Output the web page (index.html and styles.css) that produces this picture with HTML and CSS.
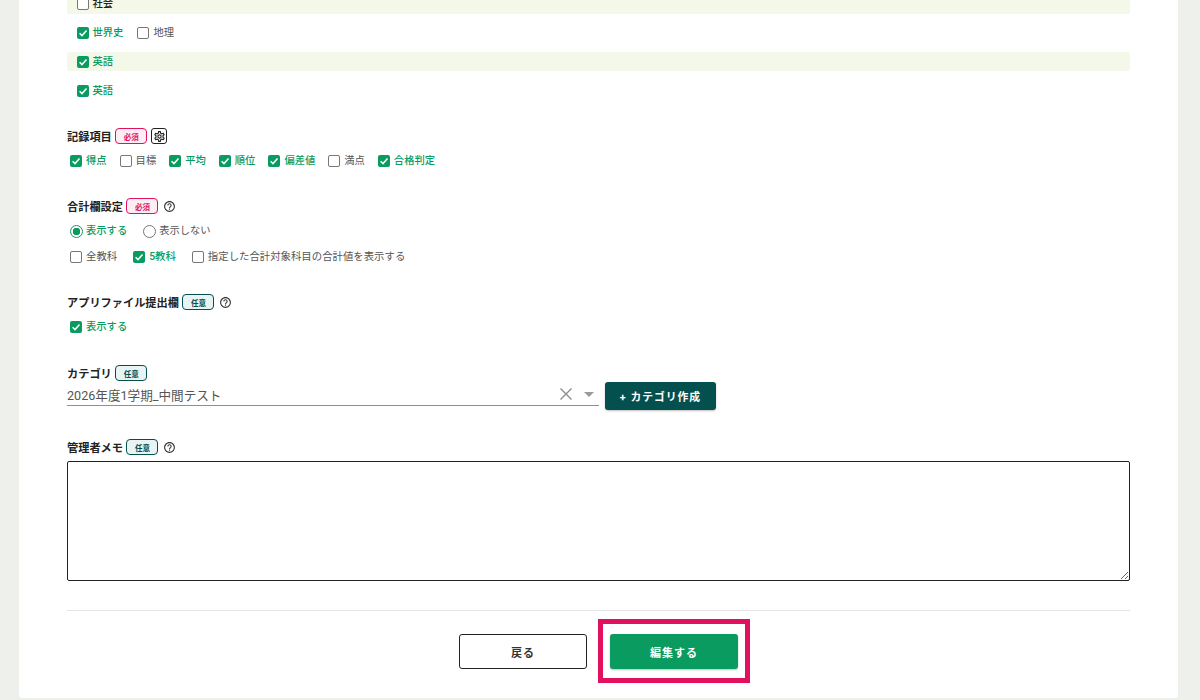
FILE: index.html
```html
<!DOCTYPE html>
<html lang="ja">
<head>
<meta charset="utf-8">
<title>編集</title>
<link rel="stylesheet" href="styles.css">
</head>
<body>
<svg class="defs" width="0" height="0" aria-hidden="true">
  <symbol id="tick" viewBox="0 0 12 12"><path d="M2.6 6.2 5 8.6l4.5-5" fill="none" stroke="#fff" stroke-width="1.5"/></symbol>
  <symbol id="help" viewBox="0 0 24 24"><path d="M11 18h2v-2h-2v2zm1-16C6.48 2 2 6.48 2 12s4.48 10 10 10 10-4.48 10-10S17.52 2 12 2zm0 18c-4.41 0-8-3.59-8-8s3.59-8 8-8 8 3.59 8 8-3.59 8-8 8zm0-14c-2.21 0-4 1.79-4 4h2c0-1.1.9-2 2-2s2 .9 2 2c0 2-3 1.75-3 5h2c0-2.25 3-2.5 3-5 0-2.21-1.79-4-4-4z"/></symbol>
</svg>
<main class="card">
  <div class="band band-first"><label class="opt"><span class="box"></span><span class="strong">社会</span></label></div>
  <div class="row-sub">
    <label class="opt on"><span class="box"><svg><use href="#tick"/></svg></span>世界史</label>
    <label class="opt"><span class="box"></span>地理</label>
  </div>
  <div class="band"><label class="opt on"><span class="box"><svg><use href="#tick"/></svg></span>英語</label></div>
  <div class="row-sub row-low">
    <label class="opt on"><span class="box"><svg><use href="#tick"/></svg></span>英語</label>
  </div>

  <section class="field field-record">
    <div class="label">記録項目<span class="badge req">必須</span>
      <button class="gear" type="button" aria-label="設定"><svg viewBox="0 0 24 24"><path d="M19.43 12.98c.04-.32.07-.64.07-.98 0-.34-.03-.66-.07-.98l2.11-1.65c.19-.15.24-.42.12-.64l-2-3.46c-.09-.16-.26-.25-.44-.25-.06 0-.12.01-.17.03l-2.49 1c-.52-.4-1.08-.73-1.69-.98l-.38-2.65C14.46 2.18 14.25 2 14 2h-4c-.25 0-.46.18-.49.42l-.38 2.65c-.61.25-1.17.59-1.69.98l-2.49-1c-.06-.02-.12-.03-.18-.03-.17 0-.34.09-.43.25l-2 3.46c-.13.22-.07.49.12.64l2.11 1.65c-.04.32-.07.65-.07.98 0 .33.03.66.07.98l-2.11 1.65c-.19.15-.24.42-.12.64l2 3.46c.09.16.26.25.44.25.06 0 .12-.01.17-.03l2.49-1c.52.4 1.08.73 1.69.98l.38 2.65c.03.24.24.42.49.42h4c.25 0 .46-.18.49-.42l.38-2.65c.61-.25 1.17-.59 1.69-.98l2.49 1c.06.02.12.03.18.03.17 0 .34-.09.43-.25l2-3.46c.12-.22.07-.49-.12-.64l-2.11-1.65zm-1.98-1.71c.04.31.05.52.05.73 0 .21-.02.43-.05.73l-.14 1.13.89.7 1.08.84-.7 1.21-1.27-.51-1.04-.42-.9.68c-.43.32-.84.56-1.25.73l-1.06.43-.16 1.13-.2 1.35h-1.4l-.19-1.35-.16-1.13-1.06-.43c-.43-.18-.83-.41-1.23-.71l-.91-.7-1.06.43-1.27.51-.7-1.21 1.08-.84.89-.7-.14-1.13c-.03-.31-.05-.54-.05-.74s.02-.43.05-.73l.14-1.13-.89-.7-1.08-.84.7-1.21 1.27.51 1.04.42.9-.68c.43-.32.84-.56 1.25-.73l1.06-.43.16-1.13.2-1.35h1.39l.19 1.35.16 1.13 1.06.43c.43.18.83.41 1.23.71l.91.7 1.06-.43 1.27-.51.7 1.21-1.07.85-.89.7.14 1.13zM12 8c-2.21 0-4 1.79-4 4s1.79 4 4 4 4-1.79 4-4-1.79-4-4-4zm0 6c-1.1 0-2-.9-2-2s.9-2 2-2 2 .9 2 2-.9 2-2 2z"/></svg></button>
    </div>
    <div class="opts">
      <label class="opt on"><span class="box"><svg><use href="#tick"/></svg></span>得点</label>
      <label class="opt"><span class="box"></span>目標</label>
      <label class="opt on"><span class="box"><svg><use href="#tick"/></svg></span>平均</label>
      <label class="opt on"><span class="box"><svg><use href="#tick"/></svg></span>順位</label>
      <label class="opt on"><span class="box"><svg><use href="#tick"/></svg></span>偏差値</label>
      <label class="opt"><span class="box"></span>満点</label>
      <label class="opt on"><span class="box"><svg><use href="#tick"/></svg></span>合格判定</label>
    </div>
  </section>

  <section class="field">
    <div class="label">合計欄設定<span class="badge req">必須</span><svg class="help"><use href="#help"/></svg></div>
    <div class="opts wide">
      <label class="opt on"><span class="radio"></span>表示する</label>
      <label class="opt"><span class="radio"></span>表示しない</label>
    </div>
    <div class="opts wide second">
      <label class="opt"><span class="box"></span>全教科</label>
      <label class="opt on"><span class="box"><svg><use href="#tick"/></svg></span>5教科</label>
      <label class="opt"><span class="box"></span>指定した合計対象科目の合計値を表示する</label>
    </div>
  </section>

  <section class="field">
    <div class="label">アプリファイル提出欄<span class="badge any">任意</span><svg class="help"><use href="#help"/></svg></div>
    <div class="opts">
      <label class="opt on"><span class="box"><svg><use href="#tick"/></svg></span>表示する</label>
    </div>
  </section>

  <section class="field field-category">
    <div class="label">カテゴリ<span class="badge any">任意</span></div>
    <div class="category-row">
      <div class="select">
        <span class="select-value">2026年度1学期_中間テスト</span>
        <svg class="clear" viewBox="0 0 14 14"><path d="M1.5 1.500l11 11M12.500 1.500l-11 11" fill="none" stroke="#8a8a8a" stroke-width="1.3"/></svg>
        <svg class="caret" viewBox="0 0 10 5"><path d="M0 0h10L5 5z" fill="#9a9a9a"/></svg>
      </div>
      <button class="btn-category" type="button">+ カテゴリ作成</button>
    </div>
  </section>

  <section class="field field-memo">
    <div class="label">管理者メモ<span class="badge any">任意</span><svg class="help"><use href="#help"/></svg></div>
    <textarea class="memo"></textarea>
  </section>

  <hr class="divider">
  <div class="actions">
    <button class="btn-back" type="button">戻る</button>
    <div class="submit-wrap">
      <button class="btn-submit" type="button">編集する</button>
      <span class="highlight"></span>
    </div>
  </div>
</main>
</body>
</html>
```
FILE: styles.css
```css
* { box-sizing: border-box; }
html, body { height: 100%; overflow: hidden; }
body {
  margin: 0;
  background: #eef0ec;
  font-family: "Roboto", "Noto Sans CJK JP", sans-serif;
  color: #222;
}
.defs { position: absolute; }
.card {
  width: 1159px;
  height: 703px;
  margin: -5px 0 0 19px;
  padding: 0 48px;
  background: #fff;
  border-radius: 0 0 3px 3px;
}
.band {
  height: 19px;
  padding-left: 9.500px;
  display: flex;
  align-items: center;
  background: #f3f8e9;
  border-radius: 2px;
}
.band-first { padding-bottom: 2px; }
.row-sub {
  height: 38px;
  padding-left: 9.500px;
  display: flex;
  align-items: center;
  gap: 14px;
}
.row-low { padding-top: 2px; }
.opt {
  display: inline-flex;
  align-items: center;
  gap: 4px;
  font-size: 10.300px;
  line-height: 16px;
  color: #555;
  white-space: nowrap;
}
.opt.on { color: #0a9b60; font-weight: 500; }
.strong { color: #222; font-weight: 500; }
.box {
  width: 12px;
  height: 12px;
  flex: none;
  border: 1px solid #777;
  border-radius: 2px;
  background: #fff;
}
.opt.on .box { background: #0a9b60; border: 0; }
.box svg { display: block; width: 12px; height: 12px; }
.radio {
  width: 13px;
  height: 13px;
  flex: none;
  margin-right: -1px;
  border: 1px solid #777;
  border-radius: 50%;
  background: #fff;
}
.opt.on .radio {
  border-color: #0a9b60;
  background: radial-gradient(circle, #0a9b60 0 3.5px, #fff 4px);
}
.field { margin-top: 29px; }
.field-record { margin-top: 19px; }
.field-category { margin-top: 30px; }
.field-memo { margin-top: 29px; }
.label {
  height: 16px;
  display: flex;
  align-items: center;
  font-size: 11.200px;
  font-weight: 700;
  color: #222;
}
.badge {
  width: 32px;
  height: 16px;
  margin-left: 3.500px;
  display: flex;
  align-items: center;
  justify-content: center;
  border: 1px solid;
  border-radius: 4px;
  font-size: 7.500px;
  font-weight: 700;
}
.req { color: #e0115f; border-color: #e0115f; background: #fdeef3; }
.any { color: #04504f; border-color: #04504f; background: #e8f4f3; }
.gear {
  width: 16px;
  height: 16px;
  margin-left: 4px;
  padding: 0.500px;
  display: block;
  border: 1px solid #222;
  border-radius: 3px;
  background: #fff;
}
.gear svg { display: block; width: 13px; height: 13px; fill: #222; }
.help { width: 13px; height: 13px; margin-left: 5px; fill: #333; }
.opts {
  height: 16px;
  margin-top: 9px;
  margin-left: 3px;
  display: flex;
  align-items: center;
  gap: 13px;
}
.wide { gap: 16px; }
.second { margin-top: 10px; }
.second .opt { font-size: 10.400px; }
.category-row {
  height: 28px;
  margin-top: 1px;
  display: flex;
  align-items: flex-start;
  gap: 6px;
}
.select {
  width: 532px;
  height: 21px;
  margin-top: 3px;
  padding: 0 5px 2px 0;
  display: flex;
  align-items: center;
  border-bottom: 1px solid #8f8f8f;
}
.select-value { flex: 1; font-size: 12.600px; color: #555; }
.clear { width: 14px; height: 14px; margin-right: 11px; }
.caret { width: 10px; height: 5px; }
.btn-category {
  width: 111px;
  height: 28px;
  padding: 0;
  border: 0;
  border-radius: 3px;
  background: #04504f;
  box-shadow: 0 1px 2px rgba(0, 0, 0, .25);
  color: #fff;
  font: 700 10.800px "Roboto", "Noto Sans CJK JP", sans-serif;
  letter-spacing: 1px;
}
.memo {
  display: block;
  width: 100%;
  height: 120px;
  margin-top: 6px;
  border: 1px solid #222;
  border-radius: 2px;
  background: #fff;
}
.divider {
  height: 1px;
  margin: 29px 0 0;
  border: 0;
  background: #e4e4e4;
}
.actions {
  margin-top: 23px;
  display: flex;
  justify-content: center;
  gap: 23px;
}
.btn-back, .btn-submit {
  width: 128px;
  height: 35px;
  padding: 0;
  border-radius: 3px;
  font: 700 11px "Roboto", "Noto Sans CJK JP", sans-serif;
  letter-spacing: 1px;
}
.btn-back { border: 1px solid #222; background: #fff; color: #333; }
.btn-submit {
  display: block;
  border: 0;
  background: #0a9b60;
  box-shadow: 0 1px 2px rgba(0, 0, 0, .25);
  color: #fff;
}
.submit-wrap { position: relative; }
.highlight {
  position: absolute;
  inset: -15px -12px -14px -12px;
  border: 5px solid #e0115f;
  pointer-events: none;
}
```
